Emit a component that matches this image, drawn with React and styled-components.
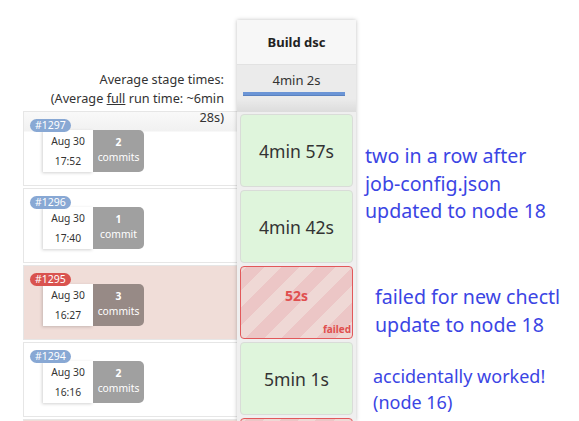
import React from 'react';
import styled, { createGlobalStyle, css } from 'styled-components';

const GlobalStyle = createGlobalStyle`
  html, body {
    margin: 0;
    padding: 0;
    background: #fff;
    font-family: "Noto Sans", "Open Sans", sans-serif;
    overflow: hidden;
  }
`

const Page = styled.div`
  display: flex;
  width: 579px;
  height: 421px;
  overflow: hidden;
`

const LeftPane = styled.div`
  flex: none;
  width: 237px;
  display: flex;
  flex-direction: column;
`

const AvgLabel = styled.div`
  position: relative;
  z-index: 1;
  flex: none;
  box-sizing: border-box;
  height: 111px;
  padding: 70px 13px 0 0;
  text-align: right;
  font-size: 12.7px;
  line-height: 19px;
  color: #333;
  white-space: nowrap;

  u { text-decoration: underline; }
`

const Runs = styled.div`
  display: flex;
  flex-direction: column;
  gap: 2px;
  padding-left: 23px;
`

const RunRow = styled.div`
  box-sizing: border-box;
  height: 75px;
  flex: none;
  border: 1px solid #e6e6e6;
  border-right: none;
  background: ${p => p.$failed ? '#f0ddd8' : '#fff'};
  display: flex;
  flex-direction: column;
  align-items: flex-start;
  ${p => p.$first && css`
    background: linear-gradient(#f9f9f9, #f1f1f1 19px, #fff 20px);
  `}
`

const Badge = styled.span`
  position: relative;
  z-index: 1;
  margin: 7px 0 0 6px;
  height: 13px;
  padding: 0 5px;
  border-radius: 7px;
  background: ${p => p.$failed ? '#d9534f' : '#88a8d4'};
  color: #fff;
  font-size: 10.5px;
  line-height: 13px;
`

const Info = styled.div`
  display: flex;
  margin: -2px 0 0 19px;
`

const DateBox = styled.div`
  box-sizing: border-box;
  width: 50px;
  height: 42px;
  padding-top: 1px;
  background: #fff;
  box-shadow: -1px 1px 3px rgba(0, 0, 0, 0.18);
  text-align: center;
  font-size: 10.3px;
  line-height: 20px;
  color: #333;
`

const CommitsBox = styled.div`
  box-sizing: border-box;
  width: 51px;
  height: 42px;
  padding-top: 5px;
  background: ${p => p.$failed ? '#978a86' : '#a0a0a0'};
  border-radius: 0 5px 5px 0;
  color: #fff;
  text-align: center;
  font-size: 10.3px;
  line-height: 15px;

  b { display: block; font-weight: 700; }
`

const StageCol = styled.div`
  flex: none;
  width: 119px;
  margin-top: 20px;
  background: #efefef;
  box-shadow: 0 0 4px rgba(0, 0, 0, 0.25);
  display: flex;
  flex-direction: column;
  position: relative;
  z-index: 2;
`

const ColHeader = styled.div`
  flex: none;
  box-sizing: border-box;
  height: 45px;
  background: #f7f7f7;
  border-bottom: 1px solid #e2e2e2;
  display: flex;
  align-items: center;
  justify-content: center;
  font-size: 13px;
  font-weight: 700;
  color: #222;
`

const AvgCell = styled.div`
  flex: none;
  box-sizing: border-box;
  height: 47px;
  padding-top: 6px;
  background: linear-gradient(#ebebeb 72%, #dcdcdc);
  text-align: center;
  font-size: 13px;
  line-height: 18px;
  color: #333;
`

const AvgBar = styled.div`
  width: 102px;
  height: 3px;
  margin: 3px 0 0 6px;
  background: #6b95d6;
  border-bottom: 1px solid #5a82c0;
`

const Cells = styled.div`
  flex: none;
  display: flex;
  flex-direction: column;
  gap: 3px;
  padding: 2px 3px 0 3px;
`

const Cell = styled.div`
  box-sizing: border-box;
  position: relative;
  height: 73px;
  flex: none;
  border: 1px solid #d9dcd8;
  border-radius: 4px;
  background: #dff5dc;
  display: flex;
  align-items: center;
  justify-content: center;
  font-size: 17.6px;
  color: #333;
  ${p => p.$failed && css`
    border-color: #e2585a;
    background: repeating-linear-gradient(
      -45deg,
      #efd8d5 0 12px,
      #ecc6c6 12px 25px
    );
    font-size: 14px;
    font-weight: 700;
    color: #e04f4f;
    padding-bottom: 14px;
  `}
`

const FailedTag = styled.span`
  position: absolute;
  right: 1px;
  bottom: 2px;
  font-size: 10px;
  font-weight: 700;
  color: #e04f4f;
`

const Notes = styled.div`
  flex: 1;
  min-width: 0;
  display: flex;
  flex-direction: column;
  overflow: hidden;
`

const Note = styled.div`
  flex: none;
  margin: ${p => p.$top}px 0 0 ${p => p.$left}px;
  font-size: ${p => p.$size}px;
  line-height: ${p => p.$lh}px;
  color: #3b45e4;
  white-space: nowrap;
`

// last run only peeks in at the bottom edge of the view
const runs = [
  { id: 1297, date: 'Aug 30', time: '17:52', commits: 2, stage: '4min 57s' },
  { id: 1296, date: 'Aug 30', time: '17:40', commits: 1, stage: '4min 42s' },
  { id: 1295, date: 'Aug 30', time: '16:27', commits: 3, stage: '52s', failed: true },
  { id: 1294, date: 'Aug 30', time: '16:16', commits: 2, stage: '5min 1s' },
  { id: 1293, failed: true, stub: true },
]

export default function App() {
  return (
    <Page>
      <GlobalStyle />
      <LeftPane>
        <AvgLabel>
          Average stage times:<br />
          (Average <u>full</u> run time: ~6min<br />
          28s)
        </AvgLabel>
        <Runs>
          {runs.map((r, i) => (
            <RunRow key={r.id} $failed={r.failed} $first={i === 0}>
              {!r.stub && (
                <>
                  <Badge $failed={r.failed}>#{r.id}</Badge>
                  <Info>
                    <DateBox>{r.date}<br />{r.time}</DateBox>
                    <CommitsBox $failed={r.failed}>
                      <b>{r.commits}</b>
                      {r.commits === 1 ? 'commit' : 'commits'}
                    </CommitsBox>
                  </Info>
                </>
              )}
            </RunRow>
          ))}
        </Runs>
      </LeftPane>

      <StageCol>
        <ColHeader>Build dsc</ColHeader>
        <AvgCell>
          4min 2s
          <AvgBar />
        </AvgCell>
        <Cells>
          {runs.map(r => (
            <Cell key={r.id} $failed={r.failed}>
              {r.stage}
              {r.failed && !r.stub && <FailedTag>failed</FailedTag>}
            </Cell>
          ))}
        </Cells>
      </StageCol>

      <Notes>
        <Note $top={142} $left={9} $size={19.6} $lh={27.5}>
          two in a row after<br />job-config.json<br />updated to node 18
        </Note>
        <Note $top={58} $left={19} $size={19.6} $lh={28}>
          failed for new chectl<br />update to node 18
        </Note>
        <Note $top={24} $left={17} $size={18} $lh={26}>
          accidentally worked!<br />(node 16)
        </Note>
      </Notes>
    </Page>
  )
}
